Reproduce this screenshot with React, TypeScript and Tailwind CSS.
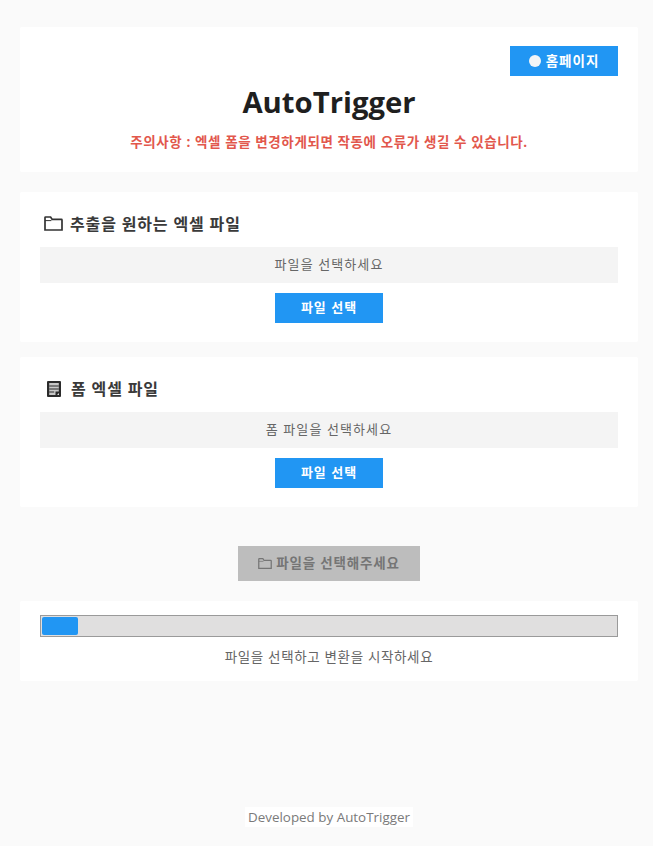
const FONT = "font-['Open_Sans','Noto_Sans_CJK_KR',sans-serif]";

function FolderIcon({ className }: { className: string }) {
  return (
    <svg viewBox="0 0 19 15" fill="none" stroke="currentColor" strokeWidth="1.7" className={className}>
      <path d="M1 14V1.6c0-.4.2-.6.6-.6h5l1.6 2.4h9.2c.4 0 .6.2.6.6V14z" />
      <path d="M1 4.6h6.4" strokeWidth="1" />
    </svg>
  );
}

function FormIcon() {
  return (
    <svg viewBox="0 0 14 16" className="w-[14px] h-[16px] mx-[3px]">
      <rect x="0" y="0" width="14" height="16" rx="1" fill="#2b2b2b" />
      <rect x="2.2" y="2" width="9.6" height="12" fill="#c8c8c8" />
      <path d="M2.2 5h9.6M2.2 8h9.6M2.2 11h5" stroke="#2b2b2b" strokeWidth="1.2" />
      <path d="M8.5 14v-3.5H14V14z" fill="#2b2b2b" />
      <path d="M10 14h2v-2z" fill="#e0e0e0" />
    </svg>
  );
}

function FileCard({ icon, title, placeholder, gapClass }: { icon: React.ReactNode; title: string; placeholder: string; gapClass: string }) {
  return (
    <section className={`bg-white rounded-[2px] px-5 pt-[21px] h-[150px] ${gapClass}`}>
      <div className="flex items-center gap-[7px] h-[21px] pl-[4px]">
        {icon}
        <h3 className="text-[16px] tracking-[0.85px] font-bold text-[#3a3a3a] leading-none">{title}</h3>
      </div>
      <div className="mt-[13px] h-[36px] bg-[#f4f4f4] flex items-center justify-center text-[13px] tracking-[1.1px] text-[#666]">
        {placeholder}
      </div>
      <div className="flex justify-center mt-[10px]">
        <button className="w-[108px] h-[30px] bg-[#2196f3] text-white text-[13px] tracking-[1px] font-bold">파일 선택</button>
      </div>
    </section>
  );
}

export default function App() {
  return (
    <div className={`${FONT} min-h-[846px] bg-[#fafafa] pl-5 pr-[15px] pt-[27px]`}>
      {/* 헤더 */}
      <header className="bg-white h-[145px] pt-[19px] px-5 rounded-[2px]">
        <div className="flex justify-end">
          <button className="w-[108px] h-[30px] bg-[#2196f3] text-white text-[13.5px] tracking-[1px] font-bold flex items-center justify-center gap-[5px]">
            <span className="w-[12px] h-[12px] rounded-full bg-[#f2f5f7]" />
            홈페이지
          </button>
        </div>
        <h1 className="text-center text-[29.3px] font-bold text-[#1f1f1f] leading-[40px] mt-[6px]">AutoTrigger</h1>
        <p className="text-center text-[13.5px] tracking-[0.6px] font-bold text-[#e2574c] leading-[20px] mt-[10px]">
          주의사항 : 엑셀 폼을 변경하게되면 작동에 오류가 생길 수 있습니다.
        </p>
      </header>

      <FileCard
        gapClass="mt-5"
        icon={<FolderIcon className="w-[19px] h-[15px] text-[#333]" />}
        title="추출을 원하는 엑셀 파일"
        placeholder="파일을 선택하세요"
      />
      <FileCard gapClass="mt-[15px]" icon={<FormIcon />} title="폼 엑셀 파일" placeholder="폼 파일을 선택하세요" />

      {/* 변환 버튼 */}
      <div className="flex justify-center mt-[39px]">
        <button className="w-[182px] h-[35px] bg-[#bdbdbd] text-[#757575] text-[13.5px] tracking-[0.8px] font-bold flex items-center justify-center gap-[4px]">
          <FolderIcon className="w-[14px] h-[11px]" />
          파일을 선택해주세요
        </button>
      </div>

      {/* 진행 상태 */}
      <section className="bg-white h-[80px] mt-5 px-5 pt-[14px] rounded-[2px]">
        <div className="h-[22px] bg-[#e0dfdf] border border-[#9a9a9a] p-[1px]">
          <div className="w-[36px] h-full bg-[#2196f3] rounded-[2px]" />
        </div>
        <p className="text-center text-[13.5px] tracking-[0.65px] text-[#666] leading-[20px] mt-[10px]">파일을 선택하고 변환을 시작하세요</p>
      </section>

      <footer className="flex justify-center mt-[126px]">
        <span className="bg-white px-[3px] text-[13.4px] font-medium text-[#7a7a7a] leading-[20px]">Developed by AutoTrigger</span>
      </footer>
    </div>
  );
}
